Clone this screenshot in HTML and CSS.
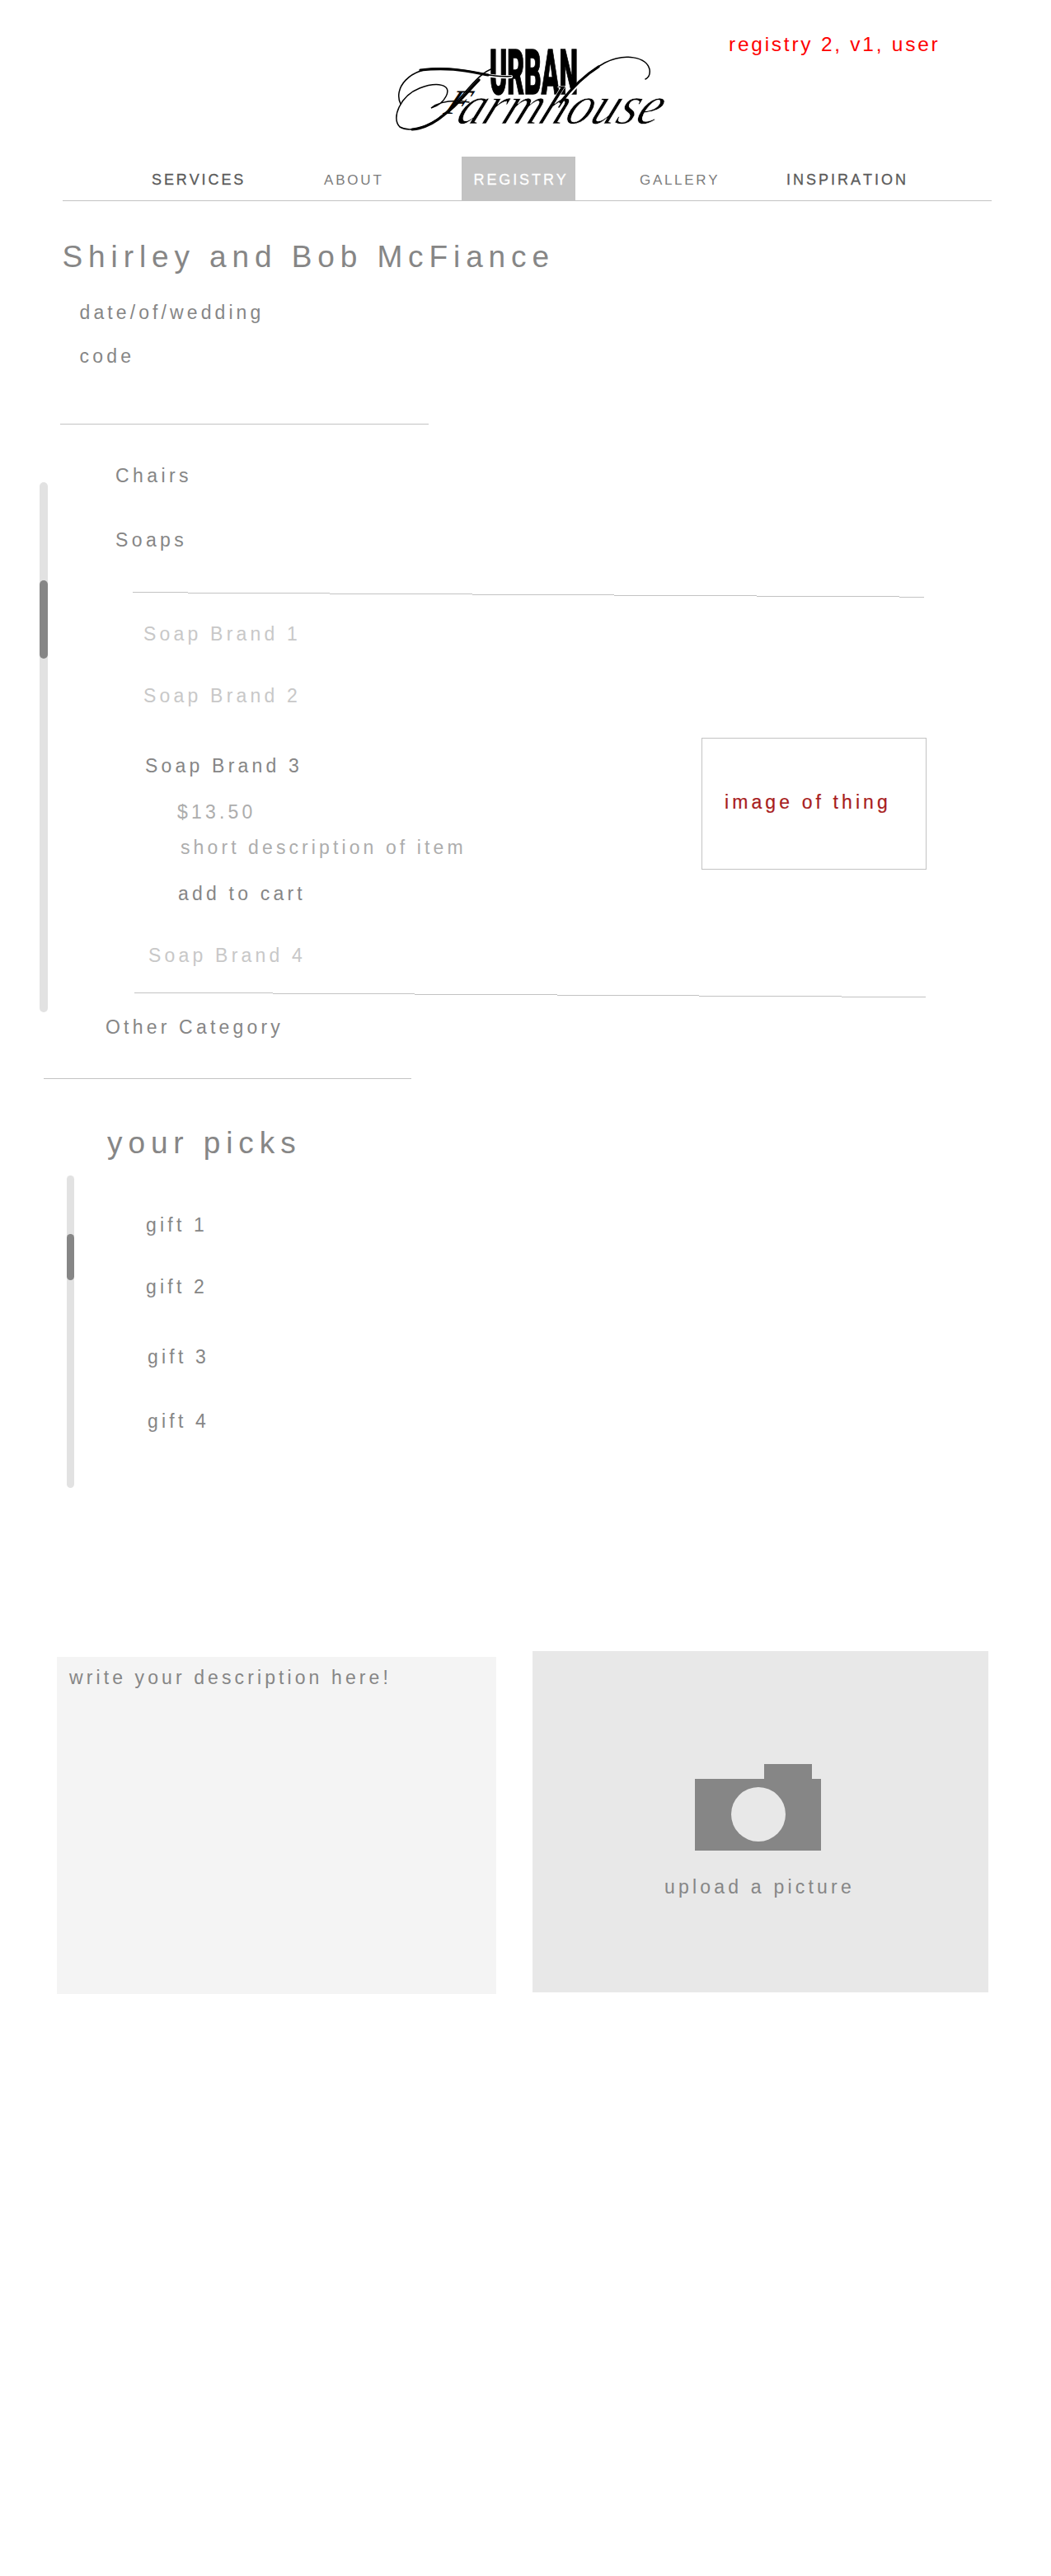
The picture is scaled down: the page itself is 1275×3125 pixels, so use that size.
FILE: index.html
```html
<!DOCTYPE html>
<html lang="en">
<head>
<meta charset="utf-8">
<title>Urban Farmhouse Registry</title>
<link rel="stylesheet" href="styles.css">
</head>
<body>
<header class="header">
  <svg class="logo" width="340" height="120" viewBox="480 50 340 120" role="img" aria-label="Urban Farmhouse">
    <text class="logo-urban" x="594" y="114" textLength="107" lengthAdjust="spacingAndGlyphs">URBAN</text>
    <g transform="translate(537 138) skewX(-26)">
      <text class="logo-initial" x="0" y="0">F</text>
    </g>
    <g transform="translate(551 149.500) skewX(-24)">
      <text class="logo-script" x="0" y="0" textLength="245" lengthAdjust="spacingAndGlyphs">armhouse</text>
    </g>
    <g class="swash">
      <path class="halo" d="M573 87C590 91 602 94 620 93M693 112C700 103 706 98 717 87"/>
      <path d="M486 126C477 108 495 82 534 83C575 83 592 95 620 92.500"/>
      <path class="thick" d="M510 85C545 81 565 86 592 91"/>
      <path d="M599 83C580 87 562 118 540 137C520 155 497 161 485 154C474 143 486 116 509 107C530 99 549 102 541 117C537 125 530 129 523 131C535 122 550 121 569 124"/>
      <path class="thick" d="M581 97C566 112 555 128 539 139C525 151 512 156 500 157"/>
      <path d="M678 130C692 108 712 88 734 76C758 64 784 69 788 84C789 90 787 94 783 96"/>
      <path class="thick" d="M680 124C696 104 710 91 726 81"/>
    </g>
  </svg>
  <p class="note">registry 2, v1, user</p>
</header>

<nav class="nav">
  <a class="nav-link strong services">SERVICES</a>
  <a class="nav-link about">ABOUT</a>
  <a class="nav-link strong active">REGISTRY</a>
  <a class="nav-link gallery">GALLERY</a>
  <a class="nav-link strong">INSPIRATION</a>
</nav>

<main>
  <section class="couple">
    <h1 class="title">Shirley and Bob McFiance</h1>
    <p class="date">date/of/wedding</p>
    <p>code</p>
  </section>

  <section class="catalog">
    <div class="scrollbar"><div class="thumb"></div></div>
    <div class="categories">
      <p class="category chairs">Chairs</p>
      <p class="category soaps">Soaps</p>
      <svg class="rule" width="962" height="8" viewBox="0 0 962 8"><path d="M0 .5H67M67 1.500H239M239 2.500H412M412 3.500H584M584 4.500H757M757 5.500H930M930 6.500H960"/></svg>
      <div class="brands">
        <div class="brand-list">
          <p class="brand first">Soap Brand 1</p>
          <p class="brand second">Soap Brand 2</p>
          <p class="brand open">Soap Brand 3</p>
          <p class="price">$13.50</p>
          <p class="summary">short description of item</p>
          <p class="add">add to cart</p>
          <p class="brand fourth">Soap Brand 4</p>
        </div>
        <div class="thing">image of thing</div>
      </div>
      <svg class="rule lower" width="962" height="8" viewBox="0 0 962 8"><path d="M0 .5H168M168 1.500H340M340 2.500H513M513 3.500H685M685 4.500H858M858 5.500H960"/></svg>
      <p class="other">Other Category</p>
    </div>
  </section>

  <section class="picks">
    <h2 class="title">your picks</h2>
    <div class="picks-body">
      <div class="scrollbar small"><div class="thumb"></div></div>
      <div class="gifts">
        <p class="gift-1">gift 1</p>
        <p class="gift-2">gift 2</p>
        <p class="gift-3">gift 3</p>
        <p class="gift-4">gift 4</p>
      </div>
    </div>
  </section>

  <section class="share">
    <div class="write">write your description here!</div>
    <div class="upload">
      <svg class="camera" width="153" height="105" viewBox="0 0 153 105">
        <path d="M0 18H84V0H142V18H153V105H0Z"/>
        <circle cx="77" cy="61" r="33"/>
      </svg>
      <p>upload a picture</p>
    </div>
  </section>
</main>
</body>
</html>
```

FILE: styles.css
```css
* { box-sizing: border-box; }
body {
  margin: 0;
  width: 1275px;
  height: 3125px;
  background: #fff;
  color: #868686;
  font: 23px/26px "Liberation Sans", Arial, sans-serif;
  letter-spacing: 4.2px;
  font-kerning: none;
  white-space: nowrap;
}
p, h1, h2 { margin: 0; font-weight: 400; }
svg { display: block; }

.header { display: flex; align-items: flex-start; height: 190px; padding-left: 480px; }
.logo { flex: none; margin-top: 50px; overflow: visible; letter-spacing: 0; }
.logo-urban { font: 900 76px Roboto, "Liberation Sans", sans-serif; stroke: #000; stroke-width: 1.5px; }
.logo-initial { font: italic 42px "Liberation Serif", serif; }
.logo-script { font: italic 66px "Liberation Serif", serif; stroke: #fff; stroke-width: .6px; }
.swash path { fill: none; stroke: #000; stroke-width: 1.500px; stroke-linecap: round; }
.swash .thick { stroke-width: 3.200px; }
.swash .halo { stroke: #fff; stroke-width: 4px; }
.note { margin: 40px 0 0 64px; color: #fe0000; font-size: 24.5px; line-height: 27px; letter-spacing: 2.75px; }

.nav {
  display: grid;
  grid-template-columns: 317px 167px 138px 256px 249px;
  width: 1127px;
  height: 54px;
  margin-left: 76px;
  border-bottom: 1px solid #c3c3c3;
}
.nav-link { padding-top: 19px; color: #7c7c7c; font-size: 17px; line-height: 19px; letter-spacing: 2.8px; }
.nav-link.strong { padding-top: 18px; color: #5a5a5a; font-size: 18px; line-height: 20px; letter-spacing: 3px; -webkit-text-stroke: .3px; }
.nav-link.strong.services { padding-left: 108px; letter-spacing: 2.9px; }
.nav-link.gallery { padding-left: 78px; letter-spacing: 2.7px; }
.nav-link.strong.active { padding-left: 14.5px; background: #c3c3c3; color: #fff; letter-spacing: 2.9px; }

.title { font-size: 37px; line-height: 41px; letter-spacing: 6.9px; }
.couple { width: 447px; height: 271px; margin-left: 73px; padding: 47px 0 0 23.500px; border-bottom: 1px solid #c3c3c3; }
.couple .title { margin-left: -21px; }
.couple .date { margin: 34px 0 27px; letter-spacing: 4.1px; }

.scrollbar { flex: none; width: 10px; height: 643px; padding-top: 119px; border-radius: 5px; background: #e2e2e2; }
.thumb { height: 95px; border-radius: 5px; background: #868686; }
.catalog { display: flex; width: 1127px; height: 794px; padding-left: 48px; background: linear-gradient(#c3c3c3, #c3c3c3) 53px 100% / 446px 1px no-repeat; }
.catalog .scrollbar { margin-top: 70px; }
.categories { padding-top: 49px; }
.category { margin-left: 82px; letter-spacing: 4.4px; }
.soaps { margin-top: 52px; }
.rule { margin: 50px 0 0 103px; fill: none; stroke: #c3c3c3; shape-rendering: crispEdges; }
.rule.lower { margin: 0 0 0 105px; }
.brands { display: flex; justify-content: space-between; width: 1008px; height: 478px; margin-left: 58px; }
.brand-list { padding: 30px 0 0 58px; }
.brand { color: #c8c8c8; }
.second { margin-top: 49px; }
.open { margin: 59px 0 0 2px; color: #868686; }
.price, .summary { color: #adadad; }
.price { margin: 30px 0 0 41px; }
.summary { margin: 17px 0 0 45px; letter-spacing: 4.1px; }
.add { margin: 30px 0 0 42px; letter-spacing: 4.2px; }
.fourth { margin: 49px 0 0 6px; }
.thing { width: 273px; height: 160px; margin-top: 169px; padding: 64px 0 0 27px; border: 1px solid #c3c3c3; color: #a81c20; letter-spacing: 4.1px; -webkit-text-stroke: .2px; }
.other { margin: 21px 0 0 70px; }

.picks { height: 694px; padding-top: 57px; }
.picks .title { margin-left: 130px; }
.picks-body { display: flex; margin: 19px 0 0 81px; }
.scrollbar.small { width: 9px; height: 379px; padding-top: 71px; }
.small .thumb { height: 56px; }
.gifts { padding: 47px 0 0 87px; }
.gift-2 { margin-top: 49px; }
.gift-3 { margin: 59px 0 0 2px; }
.gift-4 { margin: 52px 0 0 2px; }

.share { display: flex; align-items: flex-start; gap: 44px; padding-left: 69px; }
.write { width: 533px; height: 409px; margin-top: 7px; padding: 12px 0 0 15px; background: #f4f4f4; letter-spacing: 4.1px; }
.upload { display: flex; flex-direction: column; align-items: flex-start; width: 553px; height: 414px; padding: 137px 0 0 160px; background: #e8e8e8; }
.camera { margin-left: 37px; fill: #868686; }
.camera circle { fill: #e8e8e8; }
.upload p { margin-top: 31px; }
```
